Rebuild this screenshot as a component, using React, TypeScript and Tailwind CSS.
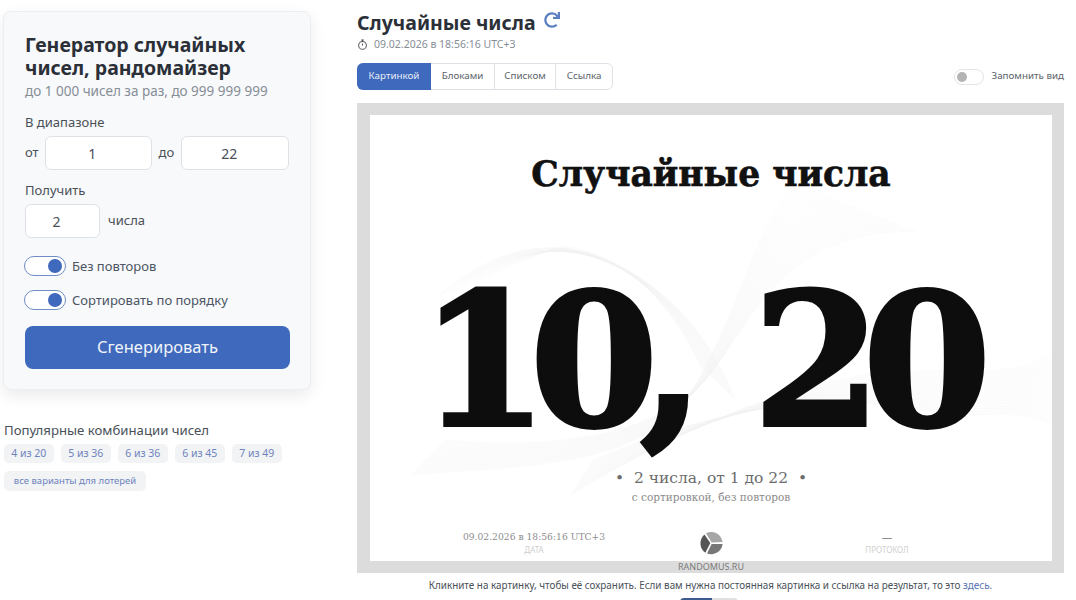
import { FaRedo } from "react-icons/fa";

const ui = { fontFamily: '"Noto Sans", "Open Sans", sans-serif' };
const slab = { fontFamily: '"DejaVu Serif", serif' };

const combos = ["4 из 20", "5 из 36", "6 из 36", "6 из 45", "7 из 49"];
const tabs = ["Блоками", "Списком", "Ссылка"];

function Toggle({ label }: { label: string }) {
  return (
    <div className="flex items-center gap-[6px]">
      <div className="-ml-px flex h-[20px] w-[42px] items-center justify-end rounded-full border border-[#6f8cc4] bg-white pr-[3px]">
        <div className="h-[14px] w-[14px] rounded-full bg-[#3f69bd]" />
      </div>
      <span className="text-[13px] leading-[20px] text-[#4b5563]">{label}</span>
    </div>
  );
}

function NumField({ value, className }: { value: string; className: string }) {
  return (
    <div className={`flex h-[34px] items-center justify-center rounded-[6px] border border-[#dee2e6] bg-white pr-[12px] text-[14px] text-[#495057] ${className}`}>
      {value}
    </div>
  );
}

function Guilloche() {
  const lines = [];
  for (let i = 0; i < 30; i++) {
    const d = i * 4;
    lines.push(
      <path key={`a${i}`} d={`M${40 + d * 0.3} ${360 - d * 0.3} C ${170 + d * 0.5} ${350 - d * 0.1}, ${270 + d * 0.3} ${350 - d * 0.4}, ${318 + d * 0.2} ${281 - d * 0.2} S ${390 + d * 0.2} ${90 + d * 0.2}, ${430 + d} ${70 + d * 0.4}`} />,
    );
    lines.push(
      <path key={`b${i}`} d={`M${200 + d * 0.2} ${380 - d * 0.3} C ${300 + d * 0.3} ${320 - d * 0.2}, ${420 + d * 0.2} ${265 + d * 0.1}, ${514 + d * 0.2} ${258 + d * 0.3} S ${630} ${265 + d * 0.2}, ${682} ${240 + d * 0.6}`} />,
    );
    lines.push(
      <path key={`c${i}`} d={`M${70 + d} ${180 - d * 0.4} C ${160 + d * 0.3} ${100 + d * 0.2}, ${270 + d * 0.4} ${120 + d * 0.3}, ${330 + d * 0.3} ${250 + d * 0.3}`} />,
    );
  }
  return (
    <svg viewBox="0 0 682 446" className="absolute inset-0 h-full w-full" fill="none" stroke="#c4c4c4" strokeWidth="0.25" opacity="0.22">
      {lines}
    </svg>
  );
}

function Logo() {
  return (
    <svg viewBox="0 0 24 24" className="h-[24px] w-[24px]">
      <path d="M7 2.2 A11.6 11.6 0 0 1 23.6 11 L12.6 11.4 Z" fill="#a6a6a6" />
      <path d="M5.4 3.6 L11.3 12 L6.4 21.8 A11.6 11.6 0 0 1 5.4 3.6 Z" fill="#555555" />
      <path d="M12.6 13 L23.6 13 A11.6 11.6 0 0 1 8 22.6 Z" fill="#777777" />
    </svg>
  );
}

export default function App() {
  return (
    <div className="flex h-[600px] w-[1076px] overflow-hidden bg-white" style={ui}>
      {/* left column */}
      <aside className="ml-[3px] mt-[11px] w-[308px] shrink-0">
        <div className="h-[379px] rounded-[8px] border border-[#eceef1] bg-[#f8f9fb] px-[21px] pt-[21px] shadow-[0_6px_16px_rgba(0,0,0,0.08)]">
          <h1 className="text-[19.5px] font-bold leading-[23px] text-[#2b3038]">
            Генератор случайных чисел, рандомайзер
          </h1>
          <p className="mt-[2px] text-[13.5px] leading-[20px] text-[#868e96]">до 1 000 чисел за раз, до 999 999 999</p>

          <div className="mt-[11px] text-[13px] leading-[20px] text-[#495057]">В диапазоне</div>
          <div className="mt-[4px] flex items-center">
            <span className="w-[20px] text-[13px] text-[#495057]">от</span>
            <NumField value="1" className="w-[107px]" />
            <span className="ml-[7px] w-[23px] text-[13px] text-[#495057]">до</span>
            <NumField value="22" className="w-[108px]" />
          </div>

          <div className="mt-[10px] text-[13px] leading-[20px] text-[#495057]">Получить</div>
          <div className="mt-[4px] flex items-center">
            <NumField value="2" className="w-[75px]" />
            <span className="ml-[8px] text-[13px] text-[#495057]">числа</span>
          </div>

          <div className="mt-[18px] flex flex-col gap-[14px]">
            <Toggle label="Без повторов" />
            <Toggle label="Сортировать по порядку" />
          </div>

          <button className="mt-[16px] h-[43px] w-[265px] rounded-[8px] bg-[#3f69bd] text-[16.5px] text-[#f1f4fa]">Сгенерировать</button>
        </div>

        <div className="ml-[1px] mt-[30px] text-[13.2px] leading-[20px] text-[#495057]">Популярные комбинации чисел</div>
        <div className="ml-[1px] mt-[4px] flex gap-[7.5px]">
          {combos.map((c) => (
            <span key={c} className="flex h-[19px] w-[49.5px] items-center justify-center rounded-[5px] bg-[#f1f3f5] text-[10.5px] text-[#6f83bd]">
              {c}
            </span>
          ))}
        </div>
        <span className="ml-[1px] mt-[8px] inline-flex h-[20px] w-[142px] items-center justify-center rounded-[5px] bg-[#f1f3f5] text-[9.5px] text-[#6f83bd]">
          все варианты для лотерей
        </span>
      </aside>

      {/* main column */}
      <main className="ml-[46px] w-[707px] shrink-0">
        <div className="mt-[9px] flex items-center gap-[8px]">
          <h2 className="text-[19.5px] font-bold leading-[27px] text-[#2b3038]">Случайные числа</h2>
          <FaRedo className="-mt-[5px] h-[16px] w-[16px] text-[#5b7fc0]" />
        </div>
        <div className="mt-[2px] flex h-[13px] items-center text-[10.5px] text-[#868e96]">
          <svg viewBox="0 0 12 12" className="mr-[6px] h-[11px] w-[11px]" fill="none" stroke="#555" strokeWidth="1.1">
            <circle cx="6" cy="7" r="4.2" />
            <path d="M4.5 1h3M6 1v2M6 7V4.8" />
          </svg>
          <span>09.02.2026 в 18:56:16 UTC+3</span>
        </div>

        <div className="mt-[12px] flex items-center justify-between">
          <div className="flex h-[27px] rounded-[6px] border border-[#dee2e6] text-[9.8px] text-[#5c636a]">
            <span className="-my-px -ml-px flex w-[74px] items-center justify-center rounded-l-[6px] bg-[#3f69bd] text-[#e8edf7]">Картинкой</span>
            {tabs.map((t, i) => (
              <span key={t} className={`flex items-center justify-center ${i === 0 ? "w-[63px]" : i === 1 ? "w-[62px] border-x border-[#dee2e6]" : "w-[56px]"}`}>
                {t}
              </span>
            ))}
          </div>
          <div className="flex items-center gap-[8px]">
            <div className="flex h-[16px] w-[30px] items-center rounded-full border border-[#e4e4e4] bg-white pl-[2px]">
              <div className="h-[10px] w-[10px] rounded-full bg-[#b4b4b4]" />
            </div>
            <span className="text-[9.8px] text-[#5c636a]">Запомнить вид</span>
          </div>
        </div>

        {/* generated picture */}
        <div className="mt-[13px] h-[470px] border-[12px] border-l-[13px] border-[#dcdcdc] bg-white">
          <div className="relative flex h-full flex-col items-center">
            <Guilloche />
            <div className="relative mt-[34px] whitespace-nowrap text-[34.5px] font-bold leading-[50px] text-[#111] [-webkit-text-stroke:0.6px_#111]" style={slab}>Случайные числа</div>
            <div className="relative h-[268px] whitespace-nowrap pr-[29px] pt-[69px] text-[184px] font-bold leading-none tracking-[-18px] text-[#0d0d0d] [word-spacing:21px] [-webkit-text-stroke:4px_#0d0d0d]" style={slab}>
              10, 20
            </div>
            <div className="relative text-[15.5px] leading-[22px] text-[#6c6c6c]" style={slab}>•&nbsp; 2 числа, от 1 до 22 &nbsp;•</div>
            <div className="relative text-[10.5px] leading-[16px] text-[#8a8a8a]" style={slab}>с сортировкой, без повторов</div>
            <div className="relative mt-[25px] flex w-full items-start">
              <div className="ml-[92px] w-[144px] text-center">
                <div className="whitespace-nowrap text-[9.2px] leading-[14px] text-[#8d8d8d]" style={slab}>09.02.2026 в 18:56:16 UTC+3</div>
                <div className="text-[8px] leading-[12px] text-[#d0d0d0]">ДАТА</div>
              </div>
              <div className="ml-[93px] mt-[1px]"><Logo /></div>
              <div className="ml-[134px] w-[60px] text-center">
                <div className="text-[10.5px] leading-[14px] text-[#8d8d8d]">—</div>
                <div className="text-[8px] leading-[12px] text-[#d0d0d0]">ПРОТОКОЛ</div>
              </div>
            </div>
            <div className="absolute bottom-[-12px] left-0 right-0 text-center text-[9px] leading-[12px] text-[#7a7a7a]">RANDOMUS.RU</div>
          </div>
        </div>

        <p className="mt-[5px] text-center text-[9.9px] leading-[14px] text-[#495057]">
          Кликните на картинку, чтобы её сохранить. Если вам нужна постоянная картинка и ссылка на результат, то это <span className="text-[#5b73b5]">здесь.</span>
        </p>
        <div className="ml-[323px] mt-[6px] flex h-[4px] w-[58px] overflow-hidden rounded-t-[4px]">
          <div className="w-[32px] bg-[#3f5a8f]" />
          <div className="flex-1 bg-[#e0e0e0]" />
        </div>
      </main>
    </div>
  );
}
